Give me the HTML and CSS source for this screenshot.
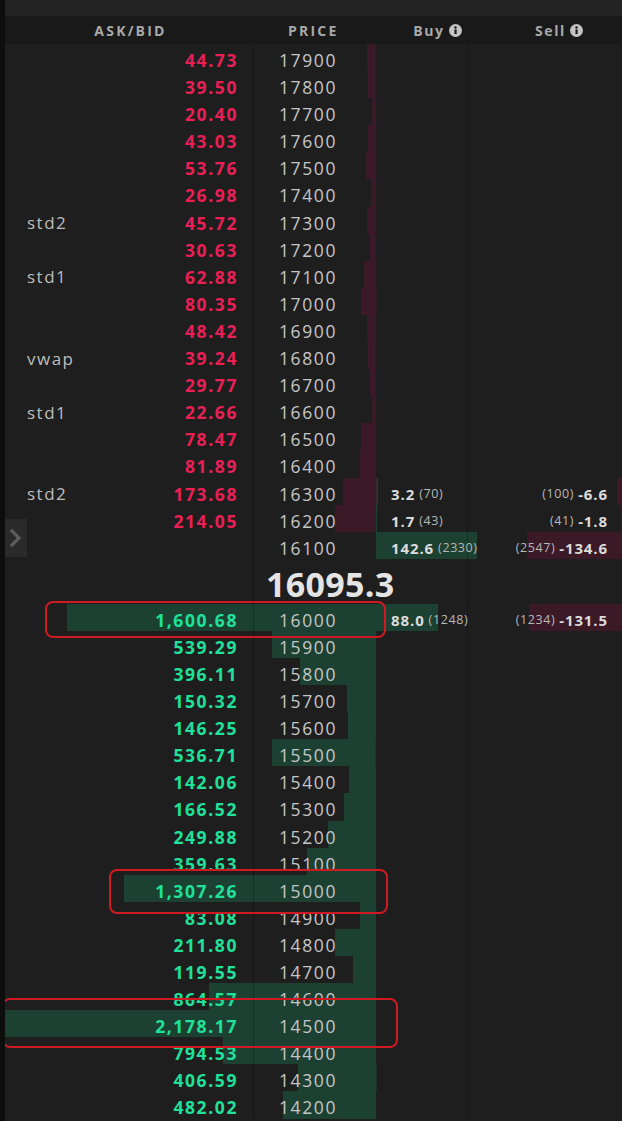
FILE: index.html
```html
<!DOCTYPE html>
<html lang="en">
<head>
<meta charset="utf-8">
<title>Order book</title>
<link rel="stylesheet" href="styles.css">
</head>
<body>
<div class="app">
  <div class="topbar"></div>
  <div class="hdr">
    <div class="h-side">ASK/BID</div>
    <div class="h-price">PRICE</div>
    <div class="h-buy">Buy <svg class="info" viewBox="0 0 14 14" width="13" height="13"><circle cx="7" cy="7" r="7" fill="#c4c4c4"/><rect x="5.9" y="5.8" width="2.3" height="5" fill="#181818"/><circle cx="7" cy="3.7" r="1.3" fill="#181818"/></svg></div>
    <div class="h-sell">Sell <svg class="info" viewBox="0 0 14 14" width="13" height="13"><circle cx="7" cy="7" r="7" fill="#c4c4c4"/><rect x="5.9" y="5.8" width="2.3" height="5" fill="#181818"/><circle cx="7" cy="3.7" r="1.3" fill="#181818"/></svg></div>
  </div>
  <div class="rows">
    <div class="row ask" style="--d:8.6px"><div class="side"><span class="val">44.73</span></div><div class="price">17900</div><div class="buy"></div><div class="sell"></div></div>
    <div class="row ask" style="--d:7.6px"><div class="side"><span class="val">39.50</span></div><div class="price">17800</div><div class="buy"></div><div class="sell"></div></div>
    <div class="row ask" style="--d:3.9px"><div class="side"><span class="val">20.40</span></div><div class="price">17700</div><div class="buy"></div><div class="sell"></div></div>
    <div class="row ask" style="--d:8.3px"><div class="side"><span class="val">43.03</span></div><div class="price">17600</div><div class="buy"></div><div class="sell"></div></div>
    <div class="row ask" style="--d:10.4px"><div class="side"><span class="val">53.76</span></div><div class="price">17500</div><div class="buy"></div><div class="sell"></div></div>
    <div class="row ask" style="--d:5.2px"><div class="side"><span class="val">26.98</span></div><div class="price">17400</div><div class="buy"></div><div class="sell"></div></div>
    <div class="row ask" style="--d:8.8px"><div class="side"><span class="tag">std2</span><span class="val">45.72</span></div><div class="price">17300</div><div class="buy"></div><div class="sell"></div></div>
    <div class="row ask" style="--d:5.9px"><div class="side"><span class="val">30.63</span></div><div class="price">17200</div><div class="buy"></div><div class="sell"></div></div>
    <div class="row ask" style="--d:12.1px"><div class="side"><span class="tag">std1</span><span class="val">62.88</span></div><div class="price">17100</div><div class="buy"></div><div class="sell"></div></div>
    <div class="row ask" style="--d:15.5px"><div class="side"><span class="val">80.35</span></div><div class="price">17000</div><div class="buy"></div><div class="sell"></div></div>
    <div class="row ask" style="--d:9.3px"><div class="side"><span class="val">48.42</span></div><div class="price">16900</div><div class="buy"></div><div class="sell"></div></div>
    <div class="row ask" style="--d:7.6px"><div class="side"><span class="tag">vwap</span><span class="val">39.24</span></div><div class="price">16800</div><div class="buy"></div><div class="sell"></div></div>
    <div class="row ask" style="--d:5.7px"><div class="side"><span class="val">29.77</span></div><div class="price">16700</div><div class="buy"></div><div class="sell"></div></div>
    <div class="row ask" style="--d:4.4px"><div class="side"><span class="tag">std1</span><span class="val">22.66</span></div><div class="price">16600</div><div class="buy"></div><div class="sell"></div></div>
    <div class="row ask" style="--d:15.1px"><div class="side"><span class="val">78.47</span></div><div class="price">16500</div><div class="buy"></div><div class="sell"></div></div>
    <div class="row ask" style="--d:15.8px"><div class="side"><span class="val">81.89</span></div><div class="price">16400</div><div class="buy"></div><div class="sell"></div></div>
    <div class="row ask" style="--d:33.5px;--b:2.3px;--s:4.7px"><div class="side"><span class="tag">std2</span><span class="val">173.68</span></div><div class="price">16300</div><div class="buy"><span class="q">3.2</span><span class="n">(70)</span></div><div class="sell"><span class="n">(100)</span><span class="q">-6.6</span></div></div>
    <div class="row ask" style="--d:41.3px;--b:1.2px;--s:1.3px"><div class="side"><span class="val">214.05</span></div><div class="price">16200</div><div class="buy"><span class="q">1.7</span><span class="n">(43)</span></div><div class="sell"><span class="n">(41)</span><span class="q">-1.8</span></div></div>
    <div class="row ask" style="--b:101px;--s:95.3px"><div class="side"></div><div class="price">16100</div><div class="buy"><span class="q">142.6</span><span class="n">(2330)</span></div><div class="sell"><span class="n">(2547)</span><span class="q">-134.6</span></div></div>
    <div class="row mid"><div class="side"></div><div class="price"><span class="last">16095.3</span></div><div class="buy"></div><div class="sell"></div></div>
    <div class="row bid" style="--d:308.9px;--b:62.3px;--s:93.1px"><div class="side"><span class="val">1,600.68</span></div><div class="price">16000</div><div class="buy"><span class="q">88.0</span><span class="n">(1248)</span></div><div class="sell"><span class="n">(1234)</span><span class="q">-131.5</span></div></div>
    <div class="row bid" style="--d:104.1px"><div class="side"><span class="val">539.29</span></div><div class="price">15900</div><div class="buy"></div><div class="sell"></div></div>
    <div class="row bid" style="--d:76.4px"><div class="side"><span class="val">396.11</span></div><div class="price">15800</div><div class="buy"></div><div class="sell"></div></div>
    <div class="row bid" style="--d:29px"><div class="side"><span class="val">150.32</span></div><div class="price">15700</div><div class="buy"></div><div class="sell"></div></div>
    <div class="row bid" style="--d:28.2px"><div class="side"><span class="val">146.25</span></div><div class="price">15600</div><div class="buy"></div><div class="sell"></div></div>
    <div class="row bid" style="--d:103.6px"><div class="side"><span class="val">536.71</span></div><div class="price">15500</div><div class="buy"></div><div class="sell"></div></div>
    <div class="row bid" style="--d:27.4px"><div class="side"><span class="val">142.06</span></div><div class="price">15400</div><div class="buy"></div><div class="sell"></div></div>
    <div class="row bid" style="--d:32.1px"><div class="side"><span class="val">166.52</span></div><div class="price">15300</div><div class="buy"></div><div class="sell"></div></div>
    <div class="row bid" style="--d:48.2px"><div class="side"><span class="val">249.88</span></div><div class="price">15200</div><div class="buy"></div><div class="sell"></div></div>
    <div class="row bid" style="--d:69.4px"><div class="side"><span class="val">359.63</span></div><div class="price">15100</div><div class="buy"></div><div class="sell"></div></div>
    <div class="row bid" style="--d:252.3px"><div class="side"><span class="val">1,307.26</span></div><div class="price">15000</div><div class="buy"></div><div class="sell"></div></div>
    <div class="row bid" style="--d:16px"><div class="side"><span class="val">83.08</span></div><div class="price">14900</div><div class="buy"></div><div class="sell"></div></div>
    <div class="row bid" style="--d:40.9px"><div class="side"><span class="val">211.80</span></div><div class="price">14800</div><div class="buy"></div><div class="sell"></div></div>
    <div class="row bid" style="--d:23.1px"><div class="side"><span class="val">119.55</span></div><div class="price">14700</div><div class="buy"></div><div class="sell"></div></div>
    <div class="row bid" style="--d:166.9px"><div class="side"><span class="val">864.57</span></div><div class="price">14600</div><div class="buy"></div><div class="sell"></div></div>
    <div class="row bid" style="--d:420.4px"><div class="side"><span class="val">2,178.17</span></div><div class="price">14500</div><div class="buy"></div><div class="sell"></div></div>
    <div class="row bid" style="--d:153.3px"><div class="side"><span class="val">794.53</span></div><div class="price">14400</div><div class="buy"></div><div class="sell"></div></div>
    <div class="row bid" style="--d:78.5px"><div class="side"><span class="val">406.59</span></div><div class="price">14300</div><div class="buy"></div><div class="sell"></div></div>
    <div class="row bid" style="--d:93px"><div class="side"><span class="val">482.02</span></div><div class="price">14200</div><div class="buy"></div><div class="sell"></div></div>
  </div>

  <button class="toggle" type="button" aria-label="Expand">
    <svg viewBox="0 0 22 38" width="22" height="38"><path d="M7 12 L14 19 L7 26" fill="none" stroke="#5c5c5c" stroke-width="3.2" stroke-linecap="square"/></svg>
  </button>

  <div class="mark mark-1"></div>
  <div class="mark mark-2"></div>
  <div class="mark mark-3"></div>
</div>
</body>
</html>
```
FILE: styles.css
```css
* { box-sizing: border-box; }

html, body {
  margin: 0;
  padding: 0;
  background: #1e1e1e;
}

body {
  font-family: "Open Sans", "Liberation Sans", sans-serif;
  color: #c8c8c8;
  overflow: hidden;
}

.app {
  position: relative;
  width: 622px;
  height: 1121px;
  overflow: hidden;
  border-left: 5px solid #0d0d0d;
  background: #1e1e1e;
}

.topbar {
  height: 16px;
  background: #232323;
}

.hdr {
  display: grid;
  grid-template-columns: 249px 123px 91px 154px;
  height: 28px;
  align-items: center;
  background: #191919;
  font-weight: 700;
  font-size: 14px;
  letter-spacing: 2.2px;
  color: #a8a8a8;
}

.h-side { text-align: center; padding-left: 2px; }
.h-price { padding-left: 34px; }
.h-buy, .h-sell {
  display: flex;
  align-items: center;
  justify-content: center;
  gap: 4px;
  letter-spacing: 1.6px;
}
.h-buy { padding-left: 30px; }
.h-sell { padding-left: 28px; }
.info { display: block; }

.rows { display: flex; flex-direction: column; }

.row {
  --d: 0px;
  --b: 0px;
  --s: 0px;
  --bar: #3b1926;
  display: grid;
  grid-template-columns: 249px 123px 91px 154px;
  height: 27.1px;
  flex: none;
  background-image:
    linear-gradient(var(--bar), var(--bar)),
    linear-gradient(#1c4132, #1c4132),
    linear-gradient(#3b1926, #3b1926);
  background-repeat: no-repeat;
  background-size: var(--d) 100%, var(--b) 100%, var(--s) 100%;
  background-position: calc(371px - var(--d)) 0, 371px 0, 100% 0;
}

.row.bid { --bar: #1c4132; }

.row > div {
  display: flex;
  align-items: center;
  padding-top: 4px;
  white-space: nowrap;
}

.side {
  border-right: 1px solid rgba(0, 0, 0, 0.28);
  padding-left: 22px;
  padding-right: 15px;
}

.tag {
  font-size: 17px;
  letter-spacing: 1.5px;
  color: #bdbdbd;
}

.val {
  margin-left: auto;
  font-weight: 700;
  font-size: 17.5px;
  letter-spacing: 1.6px;
}
.ask .val { color: #ea1f55; }
.bid .val { color: #1fe19a; }

.price {
  padding-left: 25px;
  font-size: 17.5px;
  letter-spacing: 1.6px;
  color: #c6c6c6;
}

.buy {
  border-right: 1px solid rgba(0, 0, 0, 0.22);
  padding-left: 14px;
  gap: 4px;
  overflow: visible;
}

.sell {
  justify-content: flex-end;
  padding-right: 14px;
  gap: 4px;
}

.q {
  font-weight: 700;
  font-size: 15px;
  letter-spacing: 0.9px;
  color: #dcdcdc;
}

.n {
  font-size: 12.5px;
  letter-spacing: 0.6px;
  color: #b8b8b8;
}

.row.mid { height: 45px; }
.row.mid > div { padding-top: 2px; }
.row.mid .price { padding-left: 12px; overflow: visible; }
.last {
  font-weight: 700;
  font-size: 34px;
  letter-spacing: 0.3px;
  color: #e4e4e4;
}

.toggle {
  position: absolute;
  left: 0;
  top: 519px;
  width: 22px;
  height: 38px;
  padding: 0;
  border: 0;
  background: #2a2a2a;
  display: flex;
  align-items: center;
  justify-content: center;
}
.toggle svg { display: block; }

.mark {
  position: absolute;
  border: 2px solid #cf1a22;
  border-radius: 8px;
  pointer-events: none;
}
.mark-1 { left: 40px; top: 601px; width: 341px; height: 37px; }
.mark-2 { left: 104px; top: 869px; width: 279px; height: 45px; }
.mark-3 { left: -3px; top: 998px; width: 396px; height: 50px; }
```
